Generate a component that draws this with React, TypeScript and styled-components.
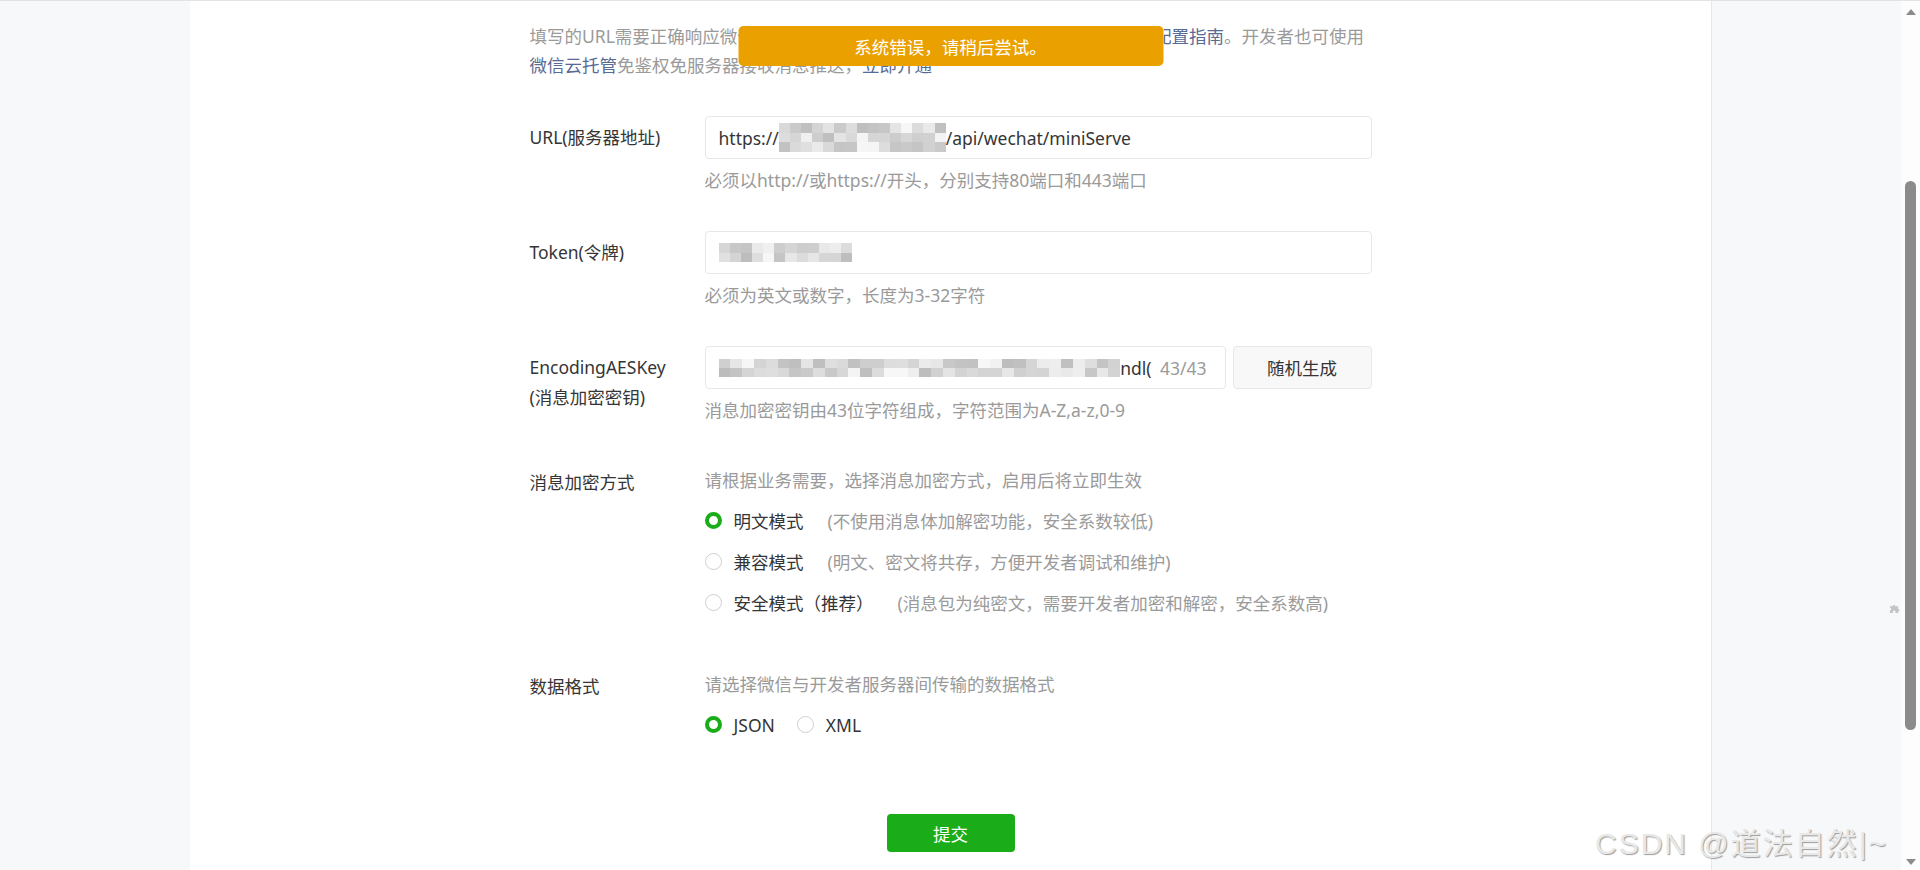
import React from 'react';
import styled, { createGlobalStyle } from 'styled-components';

const GlobalStyle = createGlobalStyle`
  html, body { margin: 0; padding: 0; height: 870px; overflow: hidden; background: #fff; }
  body { font-family: "Noto Sans", "Noto Sans CJK SC", sans-serif; font-weight: 400; }
  * { box-sizing: border-box; }
`;

const Page = styled.div`
  position: relative;
  display: flex;
  height: 870px;
  border-top: 1px solid #e3e3e3;
`;

const Gutter = styled.div<{ $right?: boolean }>`
  position: relative;
  flex: none;
  width: 190px;
  background: #f7f8fa;
  border-left: ${p => (p.$right ? '1px solid #e7e7eb' : 'none')};
`;

const Main = styled.main`
  position: relative;
  flex: 1;
  display: flex;
  justify-content: center;
  padding-top: 21px;
  background: #fff;
`;

const Content = styled.div`
  width: 842px;
  font-size: 17.5px;
  color: #353535;
`;

const Intro = styled.div`
  line-height: 29px;
  color: #9a9a9a;
  white-space: nowrap;
`;

const Link = styled.span`
  color: #576b95;
`;

const Row = styled.div<{ $gap: number }>`
  display: grid;
  grid-template-columns: 175px 1fr;
  margin-top: ${p => p.$gap}px;
`;

const Label = styled.div<{ $pad: number }>`
  padding-top: ${p => p.$pad}px;
  line-height: 30px;
  color: #353535;
`;

const Control = styled.div`
  display: flex;
  flex-direction: column;
  min-width: 0;
`;

const FieldLine = styled.div`
  display: flex;
  gap: 7px;
`;

const Field = styled.div`
  flex: 1 1 auto;
  min-width: 0;
  height: 43px;
  border: 1px solid #e4e8eb;
  border-radius: 4px;
  padding: 0 18px 0 13px;
  display: flex;
  align-items: center;
  background: #fff;
  color: #353535;
  white-space: nowrap;
  overflow: hidden;
`;

const Counter = styled.span`
  margin-left: auto;
  padding-left: 8px;
  color: #9a9a9a;
`;

const GhostButton = styled.button`
  flex: none;
  width: 139px;
  height: 43px;
  border: 1px solid #e4e8eb;
  border-radius: 4px;
  background: #f8f8f8;
  color: #353535;
  font: inherit;
  font-size: 17.5px;
`;

const Hint = styled.div`
  margin-top: 6px;
  line-height: 30px;
  color: #9a9a9a;
`;

const Desc = styled.div`
  line-height: 30px;
  color: #9a9a9a;
`;

const RadioList = styled.div<{ $inline?: boolean }>`
  display: flex;
  flex-direction: ${p => (p.$inline ? 'row' : 'column')};
  margin-top: 5px;
`;

const RadioItem = styled.div<{ $inline?: boolean }>`
  display: flex;
  align-items: center;
  height: 41px;
  margin-right: ${p => (p.$inline ? '22px' : '0')};
`;

const RadioDot = styled.span<{ $checked?: boolean }>`
  flex: none;
  width: 17px;
  height: 17px;
  border-radius: 50%;
  background: #fff;
  border: ${p => (p.$checked ? '4px solid #1aad19' : '1px solid #cfcfcf')};
  margin-right: 12px;
`;

const RadioText = styled.span`
  color: #353535;
`;

const RadioNote = styled.span<{ $gap: number }>`
  margin-left: ${p => p.$gap}px;
  color: #9a9a9a;
`;

const Submit = styled.button`
  display: block;
  margin: 69px auto 0;
  width: 128px;
  height: 38px;
  border: none;
  border-radius: 4px;
  background: #1aad19;
  color: #fff;
  font: inherit;
  font-size: 17.5px;
`;

const Toast = styled.div`
  position: absolute;
  top: 25px;
  left: 50%;
  transform: translateX(-50%);
  width: 425px;
  height: 40px;
  border-radius: 5px;
  background: #eaa100;
  color: #fff;
  font-size: 17.5px;
  display: flex;
  align-items: center;
  justify-content: center;
`;

const MosaicGrid = styled.span<{ $rows: number; $cell: number; $h: number }>`
  display: inline-grid;
  grid-template-rows: repeat(${p => p.$rows}, ${p => p.$h / p.$rows}px);
  grid-auto-flow: column;
  grid-auto-columns: ${p => p.$cell}px;
  vertical-align: middle;
  flex: none;
`;

const MosaicCell = styled.span`
  display: block;
`;

const Scrollbar = styled.div`
  flex: none;
  width: 19px;
  background: #fdfdfd;
  display: flex;
  flex-direction: column;
  align-items: center;
`;

const Arrow = styled.span<{ $down?: boolean }>`
  width: 0;
  height: 0;
  border-left: 5px solid transparent;
  border-right: 5px solid transparent;
  ${p =>
    p.$down
      ? 'border-top: 6px solid #8b8b8b; margin-bottom: 5px;'
      : 'border-bottom: 6px solid #8b8b8b; margin-top: 8px;'}
`;

const Thumb = styled.div`
  width: 11px;
  height: 549px;
  margin-top: 166px;
  border-radius: 6px;
  background: #8b8b8b;
`;

const Spacer = styled.div`
  flex: 1;
`;

const PuzzleSpot = styled.div`
  position: absolute;
  right: 1px;
  top: 602px;
  width: 11px;
  height: 11px;
  display: flex;
`;

const Watermark = styled.div`
  position: absolute;
  left: 1595px;
  top: 818px;
  white-space: nowrap;
  font-family: "Liberation Sans", "Noto Sans CJK SC", sans-serif;
  font-size: 30px;
  letter-spacing: 2px;
  color: #e8e8e8;
  text-shadow: 1px 1px 1px #9c9c9c;
  pointer-events: none;
`;

function shades(count: number, seed: number): string[] {
  const out: string[] = [];
  let s = seed;
  for (let i = 0; i < count; i++) {
    s = (s * 9301 + 49297) % 233280;
    const v = 188 + Math.floor((s / 233280) * 60);
    out.push(`rgb(${v},${v},${v})`);
  }
  return out;
}

function Mosaic({ width, height, rows, cell, seed }: { width: number; height: number; rows: number; cell: number; seed: number }) {
  const cols = Math.round(width / cell);
  const colors = shades(cols * rows, seed);
  return (
    <MosaicGrid $rows={rows} $cell={width / cols} $h={height}>
      {colors.map((c, i) => (
        <MosaicCell key={i} style={{ background: c }} />
      ))}
    </MosaicGrid>
  );
}

function Radio({ checked, text, note, noteGap = 24, inline }: { checked?: boolean; text: string; note?: string; noteGap?: number; inline?: boolean }) {
  return (
    <RadioItem $inline={inline}>
      <RadioDot $checked={checked} />
      <RadioText>{text}</RadioText>
      {note && <RadioNote $gap={noteGap}>{note}</RadioNote>}
    </RadioItem>
  );
}

export default function App() {
  return (
    <>
      <GlobalStyle />
      <Page>
        <Gutter />
        <Main>
          <Content>
            <Intro>
              填写的URL需要正确响应微信发送的Token验证，请仔细阅读小程序消息推送服务<Link>配置指南</Link>。开发者也可使用
              <br />
              <Link>微信云托管</Link>免鉴权免服务器接收消息推送，<Link>立即开通</Link>
            </Intro>

            <Row $gap={36}>
              <Label $pad={6}>URL(服务器地址)</Label>
              <Control>
                <Field>
                  https://
                  <Mosaic width={167} height={29} rows={3} cell={11} seed={7} />
                  /api/wechat/miniServe
                </Field>
                <Hint>必须以http://或https://开头，分别支持80端口和443端口</Hint>
              </Control>
            </Row>

            <Row $gap={36}>
              <Label $pad={6}>Token(令牌)</Label>
              <Control>
                <Field>
                  <Mosaic width={134} height={19} rows={2} cell={11} seed={31} />
                </Field>
                <Hint>必须为英文或数字，长度为3-32字符</Hint>
              </Control>
            </Row>

            <Row $gap={36}>
              <Label $pad={6}>
                EncodingAESKey
                <br />
                (消息加密密钥)
              </Label>
              <Control>
                <FieldLine>
                  <Field>
                    <Mosaic width={402} height={18} rows={2} cell={12} seed={53} />
                    ndl(
                    <Counter>43/43</Counter>
                  </Field>
                  <GhostButton>随机生成</GhostButton>
                </FieldLine>
                <Hint>消息加密密钥由43位字符组成，字符范围为A-Z,a-z,0-9</Hint>
              </Control>
            </Row>

            <Row $gap={40}>
              <Label $pad={2}>消息加密方式</Label>
              <Control>
                <Desc>请根据业务需要，选择消息加密方式，启用后将立即生效</Desc>
                <RadioList>
                  <Radio checked text="明文模式" note="(不使用消息体加解密功能，安全系数较低)" />
                  <Radio text="兼容模式" note="(明文、密文将共存，方便开发者调试和维护)" />
                  <Radio text="安全模式（推荐）" note="(消息包为纯密文，需要开发者加密和解密，安全系数高)" />
                </RadioList>
              </Control>
            </Row>

            <Row $gap={46}>
              <Label $pad={2}>数据格式</Label>
              <Control>
                <Desc>请选择微信与开发者服务器间传输的数据格式</Desc>
                <RadioList $inline>
                  <Radio checked inline text="JSON" />
                  <Radio inline text="XML" />
                </RadioList>
              </Control>
            </Row>

            <Submit>提交</Submit>
          </Content>
          <Toast>系统错误，请稍后尝试。</Toast>
        </Main>
        <Gutter $right>
          <PuzzleSpot>
            <svg width="11" height="11" viewBox="0 0 12 12">
              <path
                d="M1 3.5h3a1.4 1.4 0 1 1 2.8 0H10v3a1.4 1.4 0 1 1 0 2.8V11H7V9.5a1.4 1.4 0 1 0-2.8 0V11H1V8a1.4 1.4 0 1 0 0-2.8z"
                fill="#c4c4c4"
              />
            </svg>
          </PuzzleSpot>
        </Gutter>
        <Scrollbar>
          <Arrow />
          <Thumb />
          <Spacer />
          <Arrow $down />
        </Scrollbar>
        <Watermark>CSDN @道法自然|~</Watermark>
      </Page>
    </>
  );
}
